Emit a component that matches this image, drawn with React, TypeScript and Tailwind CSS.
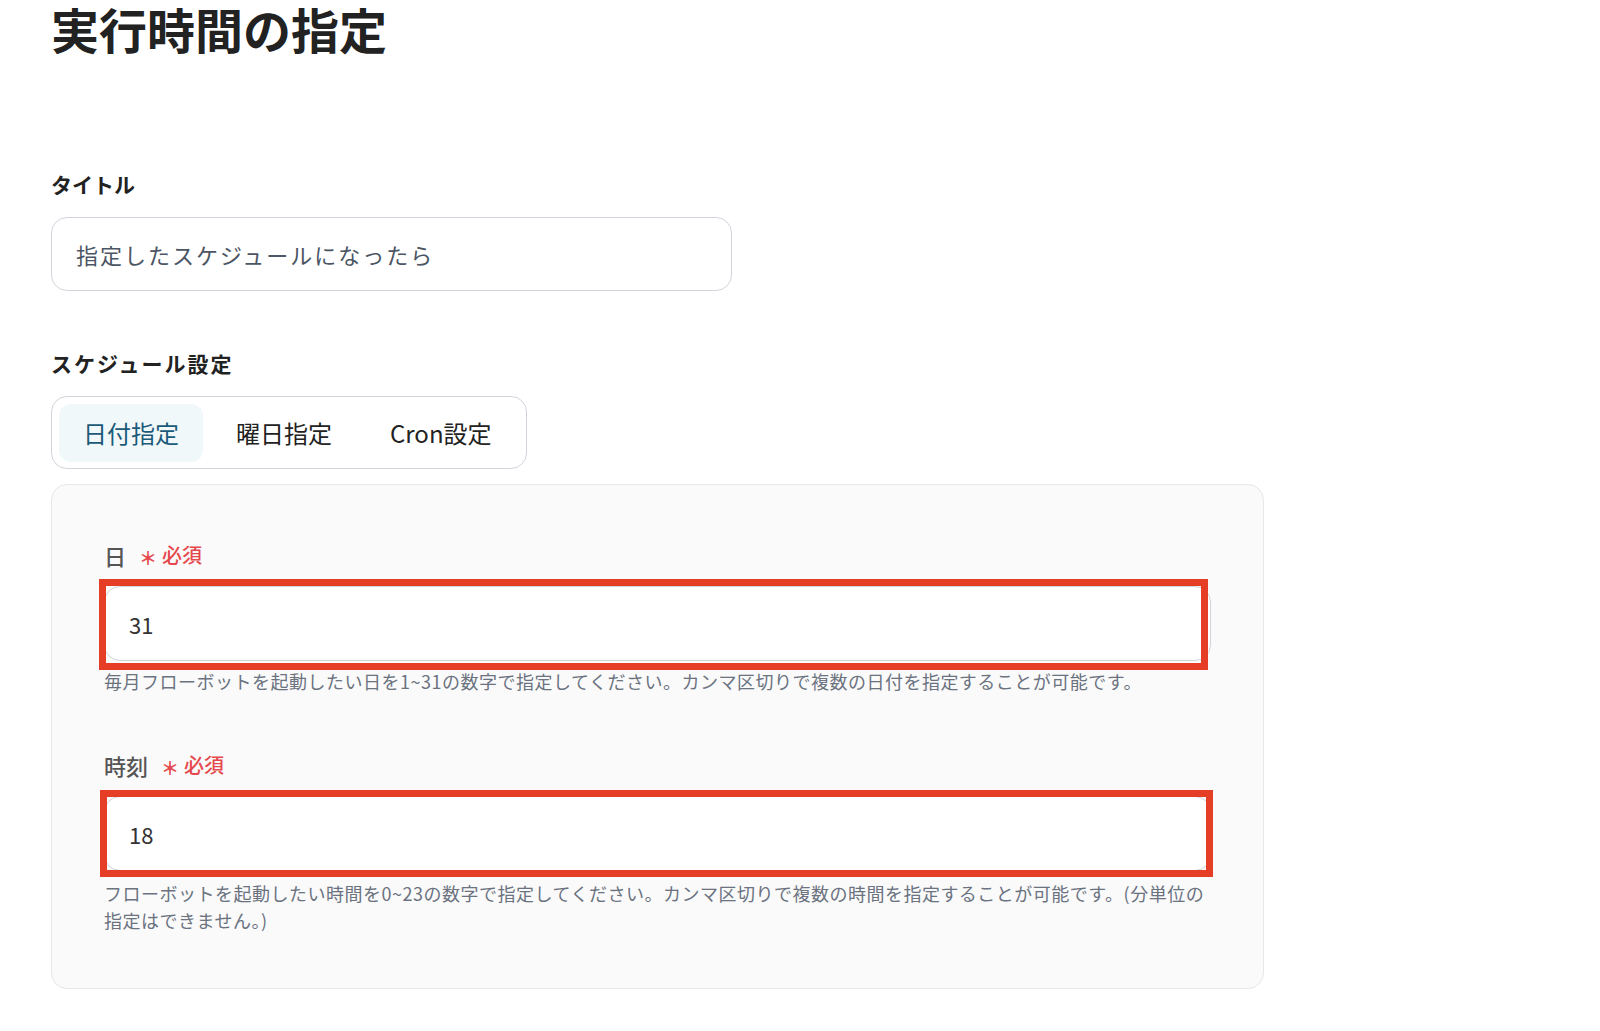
import React from 'react'

const font = { fontFamily: '"Noto Sans CJK JP", "Noto Sans", sans-serif' }

function Required() {
  return (
    <span className="ml-[13px] inline-flex items-center text-[20px] font-medium text-[#e5484d]">
      <span className="mr-[5px] mt-[4px] text-[18px] font-bold leading-none">＊</span>必須
    </span>
  )
}

function Field({
  label,
  value,
  help,
  box,
  className = '',
  helpClass = 'mt-[7px]',
}: {
  label: string
  value: string
  help: React.ReactNode
  box: string
  className?: string
  helpClass?: string
}) {
  return (
    <div className={className}>
      <div className="flex h-[26px] items-center text-[22px] font-medium leading-[26px] text-[#555]">
        {label}
        <Required />
      </div>
      <div className="relative mt-[18px]">
        <input
          readOnly
          value={value}
          className="h-[75px] w-full rounded-[16px] border border-[#d1d5db] bg-white px-[24px] text-[22px] text-[#333] outline-none"
        />
        <div className={`pointer-events-none absolute border-[7px] border-[#e63e26] ${box}`} />
      </div>
      <p className={`${helpClass} text-[18px] leading-[27px] tracking-[0.5px] text-[#6b7280]`}>{help}</p>
    </div>
  )
}

export default function App() {
  const [tab, setTab] = React.useState(0)
  const tabs = ['日付指定', '曜日指定', 'Cron設定']

  return (
    <div className="min-h-screen bg-white pl-[51px]" style={font}>
      <h1 className="text-[48px] font-bold leading-[56px] text-[#222]">実行時間の指定</h1>

      <div className="mt-[116px] text-[21px] font-bold leading-[24px] text-[#222]">タイトル</div>
      <input
        readOnly
        value="指定したスケジュールになったら"
        className="mt-[21px] h-[74px] w-[681px] rounded-[16px] border border-[#d1d5db] bg-white px-[24px] text-[22px] tracking-[0.09em] text-[#4b5563] outline-none"
      />

      <div className="mt-[60px] text-[21px] font-bold leading-[24px] tracking-[2px] text-[#222]">
        スケジュール設定
      </div>
      <div className="mt-[21px] flex h-[73px] w-[476px] items-center gap-[8px] rounded-[16px] border border-[#d1d5db] px-[7px]">
        {tabs.map((t, i) => (
          <button
            key={t}
            onClick={() => setTab(i)}
            className={
              i === tab
                ? 'h-[58px] shrink-0 whitespace-nowrap rounded-[12px] bg-[#f1f8fa] px-[24px] text-[24px] text-[#1b5a78]'
                : 'h-[58px] shrink-0 whitespace-nowrap rounded-[12px] px-[25px] text-[24px] text-[#222]'
            }
          >
            {t}
          </button>
        ))}
      </div>

      <div className="mt-[15px] w-[1213px] rounded-[16px] border border-[#e5e7eb] bg-[#fafafa] px-[52px] pb-[54px] pt-[57px]">
        <Field
          label="日"
          value="31"
          box="-left-[5px] -top-[7px] right-[3px] -bottom-[9px]"
          help="毎月フローボットを起動したい日を1~31の数字で指定してください。カンマ区切りで複数の日付を指定することが可能です。"
        />
        <Field
          className="mt-[57px]"
          helpClass="mt-[9px]"
          label="時刻"
          value="18"
          box="-left-[4px] -top-[6px] -right-[2px] -bottom-[6px]"
          help="フローボットを起動したい時間を0~23の数字で指定してください。カンマ区切りで複数の時間を指定することが可能です。(分単位の指定はできません。)"
        />
      </div>
    </div>
  )
}
